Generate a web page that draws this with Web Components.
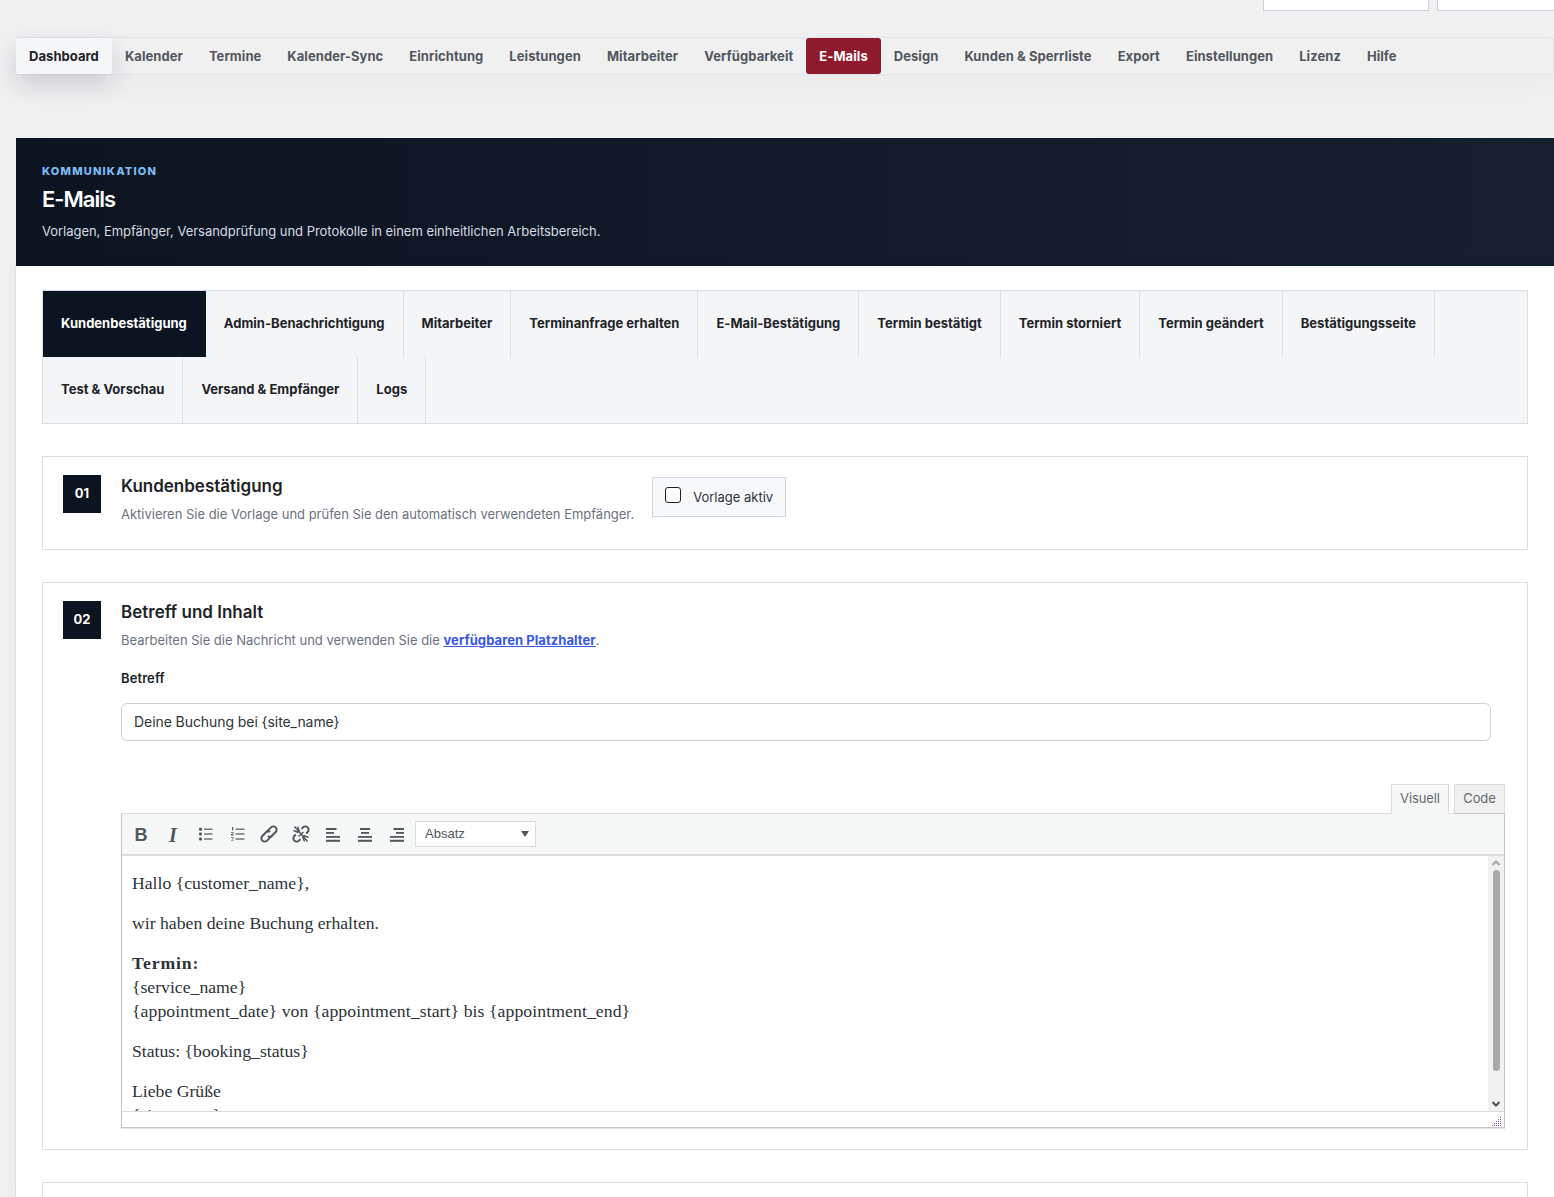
<!DOCTYPE html>
<html lang="de"><head><meta charset="utf-8"><style>
html,body{margin:0;padding:0;background:#f0f0f1;}
body{height:1197px;overflow:hidden;font-family:Inter,"Liberation Sans",sans-serif;}
</style></head><body>
<template id="t-top"><style>
:host{display:flex;justify-content:flex-end;gap:8px;height:11px;padding-left:16px;box-sizing:border-box;overflow:hidden}
i{display:block;width:166px;height:11px;box-sizing:border-box;background:#fff;border:1px solid #c9d3e0;border-top:0;flex:none}
i+i{width:130px;margin-right:-13px}
</style><i></i><i></i></template>

<template id="t-nav"><style>
:host{display:flex;margin:26px 0 0 16px;height:38px;box-sizing:border-box;border:1px solid #dfe3ec;border-left:0;border-radius:4px;align-items:stretch;box-shadow:0 14px 26px rgba(0,0,0,.018)}
</style><slot></slot></template>

<template id="t-navitem"><style>
:host{display:flex;align-items:center;padding:0 13px;height:36px;font:700 13px/16px Inter,sans-serif;letter-spacing:.062px;color:#50575e;border-radius:3px;white-space:nowrap}
:host([current]){background:#f6f7f9;color:#1d2327;box-shadow:0 10px 24px rgba(60,40,80,.17);}
:host([hot]){background:#8e1c2e;color:#fff;}
</style><slot></slot></template>

<template id="t-hero"><style>
:host{display:block;margin:63px 0 0 16px;height:128px;box-sizing:border-box;padding:26px;background:linear-gradient(90deg,#0d1421 0%,#0f1726 25%,#15202f 100%);color:#fff}
.k{font:800 11px/14px Inter,sans-serif;letter-spacing:1.2px;color:#7dbdf5;}
h1{margin:7px 0 0;font:600 22px/28px Inter,sans-serif;letter-spacing:-1px;color:#fff}
p{margin:8px 0 0;font:400 13px/20px Inter,sans-serif;letter-spacing:-.033px;color:#d6dbe3}
</style><div class="k"><slot name="k"></slot></div><h1><slot name="t"></slot></h1><p><slot name="d"></slot></p></template>

<template id="t-panel"><style>
:host{display:block;margin-left:15px;border-left:1px solid #dce0ea;background:#fff;padding:24px 26px 0;height:931px;box-sizing:border-box;overflow:hidden;box-shadow:-3px 0 12px rgba(0,0,0,.03)}
</style><slot></slot></template>

<template id="t-tabs"><style>
:host{display:flex;flex-wrap:wrap;border:1px solid #d8dde6;background:#f4f5f7;height:134px;box-sizing:border-box;align-content:flex-start}
</style><slot></slot></template>

<template id="t-tab"><style>
:host{display:flex;align-items:center;height:66px;padding:0 18px 2px;box-sizing:border-box;border-right:1px solid #dcdfe6;font:700 13px/16px Inter,sans-serif;letter-spacing:.012px;color:#1d2327;white-space:nowrap}
:host([current]){background:#0d1421;color:#fff;border-right-color:#0d1421}
</style><slot></slot></template>

<template id="t-card"><style>
:host{display:flex;gap:20px;border:1px solid #d8dde6;background:#fff;padding:18px 20px;box-sizing:border-box;margin-top:32px}
.n{width:38px;height:38px;flex:none;background:#0d1421;color:#fff;font:700 13px/36px Inter,sans-serif;text-align:center}
.b{flex:1;min-width:0}
</style><div class="n"><slot name="n"></slot></div><div class="b"><slot></slot></div></template>

<template id="t-head"><style>
:host{display:block}
h2{margin:-1px 0 0;font:600 17px/24px Inter,sans-serif;color:#1d2327}
p{margin:6px 0 0;font:400 13px/20px Inter,sans-serif;letter-spacing:-.013px;color:#6b7280}
::slotted(a){color:#3858e9;font-weight:700;letter-spacing:.06px;text-decoration:underline}
</style><h2><slot name="t"></slot></h2><p><slot></slot></p></template>

<template id="t-toggle"><style>
:host{display:flex;align-items:center;gap:12px;width:134px;height:40px;box-sizing:border-box;padding-left:12px;border:1px solid #d0d6e0;background:#f7f8fa;font:400 13px/18px Inter,sans-serif;color:#2c3338}
i{display:block;width:16px;height:16px;box-sizing:border-box;border:1px solid #1d2327;border-radius:3px;background:#fff;margin-top:-4px}
</style><i></i><slot></slot></template>

<template id="t-field"><style>
:host{display:block;margin-top:18px;width:1370px}
label{display:block;font:600 13px/20px Inter,sans-serif;letter-spacing:.1px;color:#1d2327}
div{margin-top:15px;height:38px;box-sizing:border-box;border:1px solid #c9d0da;border-radius:6px;padding:0 12px;font:400 14px/36px Inter,sans-serif;letter-spacing:-.07px;color:#2c3338;background:#fff}
</style><label><slot name="l"></slot></label><div><slot></slot></div></template>

<template id="t-editor"><style>
:host{display:block;margin-top:43px;width:1384px}
.tabs{display:flex;justify-content:flex-end;gap:5px;height:30px;position:relative;z-index:1}
.tabs span{display:block;box-sizing:border-box;width:51px;height:30px;text-align:center;font:400 13px/27px Inter,sans-serif;letter-spacing:-.1px;color:#646970;background:#f0f0f1;border:1px solid #dcdcde;border-bottom:1px solid #c3c4c7}
.tabs span.on{width:58px;background:#f6f7f7;border-bottom-color:#f6f7f7;}
.box{border:1px solid #c3c4c7;border-top:1px solid #dcdcde;box-shadow:0 1px 1px rgba(0,0,0,.1);margin-top:-1px;background:#fff}
.bar{height:40px;background:#f6f7f7;border-bottom:2px solid #dcdcde;display:flex;align-items:center;padding-left:3px;box-sizing:content-box;}
.btn{width:32px;height:40px;display:flex;align-items:center;justify-content:center;color:#50575e;flex:none}
.btn svg{display:block}
.glyph{font:700 18px/20px "Liberation Sans",sans-serif;padding-top:1px;box-sizing:border-box}
.glyph.it{font-style:italic;font-family:"Liberation Serif",serif;font-size:20px}
.sel{margin-left:2px;width:121px;height:26px;box-sizing:border-box;border:1px solid #dcdcde;background:#fff;display:flex;align-items:center;justify-content:space-between;padding:0 6px 0 9px;font:400 13px/22px "Liberation Sans",sans-serif;color:#50575e}
.sel b{display:block;width:0;height:0;border:4px solid transparent;border-top:6px solid #50575e;border-bottom:0}
.view{display:flex;height:255px;}
.txt{flex:1;overflow:hidden;padding:15px 10px 0;font:17.7px/24px "Liberation Serif",serif;color:#2c3338;min-width:0}
.sb{width:16px;flex:none;background:#f1f1f1;display:flex;flex-direction:column;align-items:center;box-sizing:border-box;padding:0 1px}
.sb svg{display:block;flex:none}
.sb .th{width:7px;height:201px;background:#a8a8a8;border-radius:4px}
.sb .sp{flex:1}
.st{height:16px;box-sizing:border-box;border-top:1px solid #dcdcde;display:flex;justify-content:flex-end;align-items:flex-end;padding:0 2px 1px 0}
</style>
<div class="tabs"><span class="on">Visuell</span><span>Code</span></div>
<div class="box">
<div class="bar">
<div class="btn glyph">B</div>
<div class="btn glyph it">I</div>
<div class="btn"><svg width="20" height="20" viewBox="0 0 20 20" fill="currentColor"><rect x="9" y="4.6" width="8.5" height="1.2"/><rect x="9" y="9.4" width="8.5" height="1.2"/><rect x="9" y="14.4" width="8.5" height="1.2"/><rect x="4" y="3.8" width="3" height="3" rx="1"/><rect x="4" y="8.5" width="3" height="3" rx="1"/><rect x="4" y="13.5" width="3" height="3" rx="1"/></svg></div>
<div class="btn"><svg width="20" height="20" viewBox="0 0 20 20" fill="currentColor"><rect x="8.5" y="4.6" width="9" height="1.2"/><rect x="8.5" y="9.4" width="9" height="1.2"/><rect x="8.5" y="14.4" width="9" height="1.2"/><path d="M5 3h1.2v3.4H5zM4 8.2h2.6v.8H4zM5.8 9h.8v.9h-.8zM4 10h2v.8H4zM4 10.8h2.6v.8H4zM4 13.2h2.6v.7H4zM5 14.6h1.6v.7H5zM4 15.9h2.6v.7H4z"/></svg></div>
<div class="btn"><svg width="20" height="20" viewBox="0 0 20 20" fill="none" stroke="currentColor" stroke-width="2"><g transform="rotate(-45 10 10)"><path d="M10.6 13.3H3.9a3.3 3.3 0 0 1 0-6.6h5.6a2.6 2.6 0 0 1 2.6 2.6"/><path d="M9.4 6.7h6.7a3.3 3.3 0 0 1 0 6.6h-5.6a2.6 2.6 0 0 1-2.6-2.6"/></g></svg></div>
<div class="btn"><svg width="20" height="20" viewBox="0 0 20 20" fill="none" stroke="currentColor" stroke-width="2"><g transform="rotate(-45 10 10)"><path d="M6 13.3H3.9a3.3 3.3 0 0 1 0-6.6H6"/><path d="M14 6.7h2.1a3.3 3.3 0 0 1 0 6.6H14"/></g><path stroke-width="1.4" d="M3.5 2.5l13 15M2.5 6.5l5 2M6.5 2.5l2 5M17.5 13.5l-5-2M13.5 17.5l-2-5M12.5 8l-5 4.5"/></svg></div>
<div class="btn"><svg width="20" height="20" viewBox="0 0 20 20" fill="currentColor"><rect x="3" y="4" width="10.5" height="2"/><rect x="3" y="8" width="8" height="1.8"/><rect x="3" y="12" width="14" height="1.8"/><rect x="3" y="15.8" width="14" height="2"/></svg></div>
<div class="btn"><svg width="20" height="20" viewBox="0 0 20 20" fill="currentColor"><rect x="5" y="4" width="10" height="2"/><rect x="6" y="8" width="8" height="1.8"/><rect x="3" y="12" width="14" height="1.8"/><rect x="3" y="15.8" width="14" height="2"/></svg></div>
<div class="btn"><svg width="20" height="20" viewBox="0 0 20 20" fill="currentColor"><rect x="6.5" y="4" width="10.5" height="2"/><rect x="9" y="8" width="8" height="1.8"/><rect x="3" y="12" width="14" height="1.8"/><rect x="3" y="15.8" width="14" height="2"/></svg></div>
<div class="sel"><span>Absatz</span><b></b></div>
</div>
<div class="view"><div class="txt"><slot></slot></div>
<div class="sb"><svg width="12" height="14" viewBox="0 0 12 14" fill="none" stroke="#a3a3a3" stroke-width="2"><path d="M2.5 9L6 5.5 9.5 9"/></svg><div class="th"></div><div class="sp"></div><svg width="12" height="14" viewBox="0 0 12 14" fill="none" stroke="#505050" stroke-width="2"><path d="M2.5 5L6 8.5 9.5 5"/></svg></div></div>
<div class="st"><svg width="10" height="10" viewBox="0 0 10 10" fill="#8a4f9c"><path d="M8 1h1v1H8zM8 3h1v1H8zM6 3h1v1H6zM8 5h1v1H8zM6 5h1v1H6zM4 5h1v1H4zM8 7h1v1H8zM6 7h1v1H6zM4 7h1v1H4zM2 7h1v1H2zM8 9h1v1H8zM6 9h1v1H6zM4 9h1v1H4zM2 9h1v1H2zM0 9h1v1H0z"/></svg></div>
</div></template>

<template id="t-para"><style>:host{display:block;margin:0 0 16px}
::slotted(b){letter-spacing:.85px}
::slotted(span){letter-spacing:.08px}
</style><slot></slot></template>

<bk-top></bk-top>
<bk-nav>
<bk-navitem current>Dashboard</bk-navitem><bk-navitem>Kalender</bk-navitem><bk-navitem>Termine</bk-navitem><bk-navitem>Kalender-Sync</bk-navitem><bk-navitem>Einrichtung</bk-navitem><bk-navitem>Leistungen</bk-navitem><bk-navitem>Mitarbeiter</bk-navitem><bk-navitem>Verfügbarkeit</bk-navitem><bk-navitem hot>E-Mails</bk-navitem><bk-navitem>Design</bk-navitem><bk-navitem>Kunden &amp; Sperrliste</bk-navitem><bk-navitem>Export</bk-navitem><bk-navitem>Einstellungen</bk-navitem><bk-navitem>Lizenz</bk-navitem><bk-navitem>Hilfe</bk-navitem>
</bk-nav>
<bk-hero><span slot="k">KOMMUNIKATION</span><span slot="t">E-Mails</span><span slot="d">Vorlagen, Empfänger, Versandprüfung und Protokolle in einem einheitlichen Arbeitsbereich.</span></bk-hero>
<bk-panel>
<bk-tabs>
<bk-tab current>Kundenbestätigung</bk-tab><bk-tab>Admin-Benachrichtigung</bk-tab><bk-tab>Mitarbeiter</bk-tab><bk-tab>Terminanfrage erhalten</bk-tab><bk-tab>E-Mail-Bestätigung</bk-tab><bk-tab>Termin bestätigt</bk-tab><bk-tab>Termin storniert</bk-tab><bk-tab>Termin geändert</bk-tab><bk-tab>Bestätigungsseite</bk-tab><bk-tab>Test &amp; Vorschau</bk-tab><bk-tab>Versand &amp; Empfänger</bk-tab><bk-tab>Logs</bk-tab>
</bk-tabs>
<bk-card style="height:94px">
<span slot="n">01</span>
<div style="display:flex;gap:18px;align-items:flex-start">
<bk-head><span slot="t">Kundenbestätigung</span>Aktivieren Sie die Vorlage und prüfen Sie den automatisch verwendeten Empfänger.</bk-head>
<bk-toggle style="margin-top:2px">Vorlage aktiv</bk-toggle>
</div>
</bk-card>
<bk-card style="height:568px">
<span slot="n">02</span>
<div>
<bk-head><span slot="t">Betreff und Inhalt</span>Bearbeiten Sie die Nachricht und verwenden Sie die <a href="#">verfügbaren Platzhalter</a>.</bk-head>
<bk-field><span slot="l">Betreff</span>Deine Buchung bei {site_name}</bk-field>
<bk-editor>
<bk-para>Hallo {customer_name},</bk-para>
<bk-para>wir haben deine Buchung erhalten.</bk-para>
<bk-para><b>Termin:</b><br>{service_name}<br><span>{appointment_date} von {appointment_start} bis {appointment_end}</span></bk-para>
<bk-para>Status: {booking_status}</bk-para>
<bk-para>Liebe Grüße<br>{site_name}</bk-para>
</bk-editor>
</div>
</bk-card>
<bk-card style="height:60px"><span slot="n"></span></bk-card>
</bk-panel>
<script>
for (const n of ['top','nav','navitem','hero','panel','tabs','tab','card','head','toggle','field','editor','para']) {
  customElements.define('bk-'+n, class extends HTMLElement {
    constructor(){super();this.attachShadow({mode:'open'}).appendChild(document.getElementById('t-'+n).content.cloneNode(true));}
  });
}
</script>
</body></html>
